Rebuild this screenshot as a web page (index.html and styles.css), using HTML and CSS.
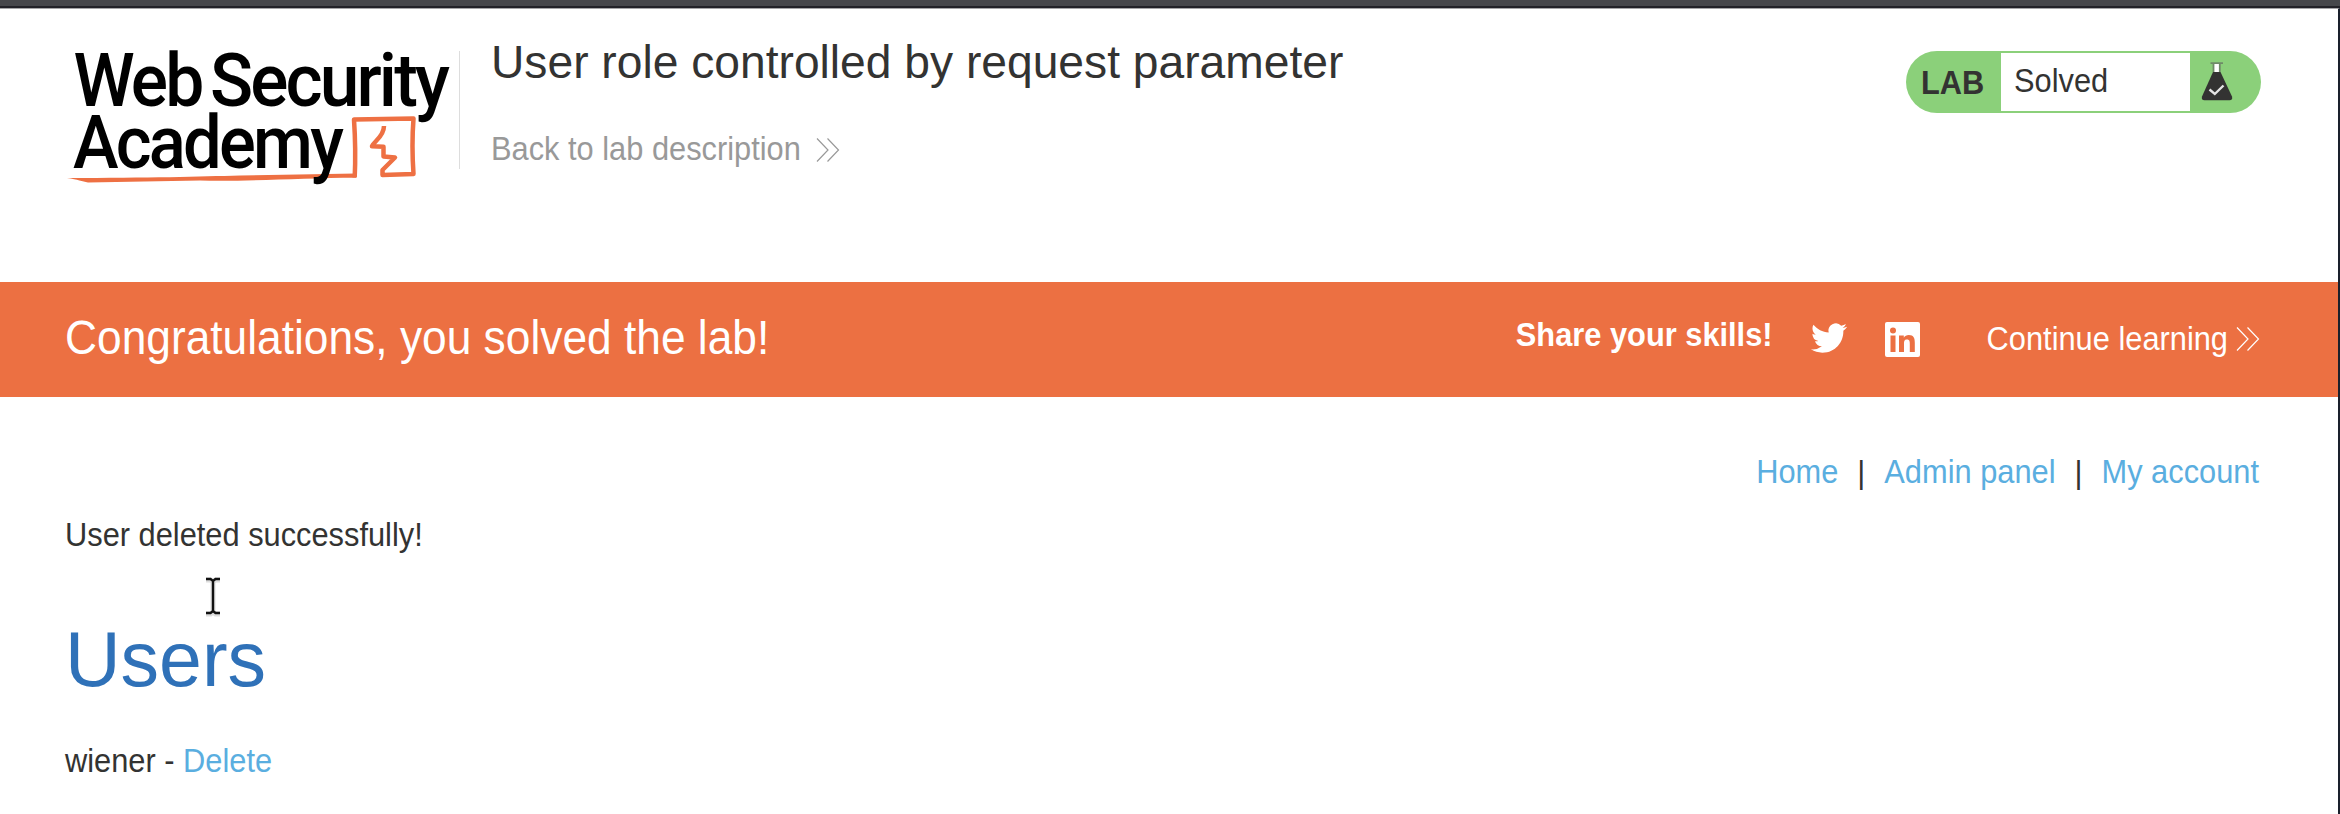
FILE: index.html
```html
<!DOCTYPE html>
<html lang="en">
<head>
<meta charset="utf-8">
<title>User role controlled by request parameter</title>
<link rel="stylesheet" href="styles.css">
</head>
<body>
<div class="chrome-bar"></div>
<div class="page">
  <header class="lab-header">
    <svg class="logo" width="394" height="160" viewBox="60 30 394 160" role="img" aria-label="Web Security Academy">
      <g class="logo-mark">
        <path class="logo-fill" d="M67 178 C150 178 200 176.500 240 175.500 L356 173.500 L356 177.800 C300 178 240 182 200 180.500 L88 182.500 C82 181.500 78 179.500 67 178Z"/>
        <path class="logo-line" d="M354.700 177.500 Q356 150 354 119.500 L413.500 118.500 Q411.500 145 413.500 174 L382.500 175 L382.500 170 L395 157.500 L383.500 156.500 L383.500 146.800 L372 146.300 C373 142 384 137 384 126"/>
      </g>
      <g class="logo-text">
        <text x="73.500" y="106" textLength="128" lengthAdjust="spacingAndGlyphs">Web</text>
        <text x="210" y="106" textLength="237" lengthAdjust="spacingAndGlyphs">Security</text>
        <text x="73" y="168" textLength="268" lengthAdjust="spacingAndGlyphs">Academy</text>
      </g>
    </svg>
    <div class="title-block">
      <h2 class="title">User role controlled by request parameter</h2>
      <a class="back-link"><span class="copy">Back to lab description</span>
        <svg class="chevrons" width="24" height="24" viewBox="0 0 24 24"><path d="M1 .5 12 12 1 23.500M11.500 .5 22.500 12 11.500 23.500"/></svg>
      </a>
    </div>
    <div class="lab-status">
      <span class="lab-tag"><span class="copy">LAB</span></span>
      <span class="lab-state"><span class="copy">Solved</span></span>
      <svg class="flask" width="32" height="39" viewBox="0 0 32 39">
        <path d="M12.500 1.500h6v9h-6z" fill="#fff"/>
        <path d="M9.500 1.200h12.500M12.500 1.200v9M18.800 1.200v9" stroke="#6f8a68" stroke-width="1.800" fill="none"/>
        <path d="M12 10h7.500l11.500 24.500q1 3.800-2.500 3.800h-25Q0 38.300 1 34.500z" fill="#333332"/>
        <path d="M8.500 27.500l5.300 4.500 8.700-8.500" stroke="#e4e4e4" stroke-width="2.400" fill="none"/>
      </svg>
    </div>
  </header>
  <section class="banner">
    <h4 class="banner-title"><span>Congratulations, you solved the lab!</span></h4>
    <div class="banner-actions">
      <span class="share"><span class="copy">Share your skills!</span></span>
      <svg class="twitter" width="36" height="36" viewBox="0 0 24 24"><path fill="#fff" d="M23.953 4.570a10 10 0 01-2.825.775 4.958 4.958 0 002.163-2.723c-.951.555-2.005.959-3.127 1.184a4.920 4.920 0 00-8.384 4.482C7.690 8.095 4.067 6.130 1.640 3.162a4.822 4.822 0 00-.666 2.475c0 1.710.870 3.213 2.188 4.096a4.904 4.904 0 01-2.228-.616v.060a4.923 4.923 0 003.946 4.827 4.996 4.996 0 01-2.212.085 4.936 4.936 0 004.604 3.417 9.867 9.867 0 01-6.102 2.105c-.390 0-.779-.023-1.170-.067a13.995 13.995 0 007.557 2.209c9.053 0 13.998-7.496 13.998-13.985 0-.210 0-.420-.015-.630A9.935 9.935 0 0024 4.590z"/></svg>
      <svg class="linkedin" width="35" height="35" viewBox="0 0 35 35">
        <rect width="35" height="35" rx="2" fill="#fff"/>
        <circle cx="8" cy="8.500" r="3"/>
        <path d="M5.500 13.500h5V30h-5zM14 13.500h4.800v2.300c1-1.700 2.800-2.700 5-2.700 5 0 6 3.300 6 7.600V30h-5v-8.200c0-2 0-4.400-2.800-4.400s-3 2.100-3 4.300V30h-5z"/>
      </svg>
      <a class="continue"><span class="copy">Continue learning</span>
        <svg class="chevrons" width="24" height="24" viewBox="0 0 24 24"><path d="M1 .5 12 12 1 23.500M11.500 .5 22.500 12 11.500 23.500"/></svg>
      </a>
    </div>
  </section>
  <main class="content">
    <nav class="nav"><a class="copy">Home</a><span class="bar">|</span><a class="copy">Admin panel</a><span class="bar">|</span><a class="copy">My account</a></nav>
    <p class="message"><span class="copy">User deleted successfully!</span></p>
    <h1 class="heading">Users</h1>
    <div class="user-row"><span class="copy">wiener - <a>Delete</a></span></div>
  </main>
  <svg class="cursor" width="22" height="42" viewBox="0 0 22 42">
    <path class="cursor-edge" d="M4 4h4.500l2.500 2 2.500-2h4.500M11 5v32M4 38h4.500l2.500-2 2.500 2h4.500"/>
    <path class="cursor-core" d="M4 3h4.500l2.500 2 2.500-2h4.500M11 4v32M4 37h4.500l2.500-2 2.500 2h4.500"/>
  </svg>
</div>
</body>
</html>
```
FILE: styles.css
```css
* { box-sizing: border-box; }

body {
  margin: 0;
  height: 814px;
  overflow: hidden;
  background: #fff;
  color: #333332;
  font-family: "Liberation Sans", Arial, sans-serif;
  font-size: 30.8px;
  line-height: 36px;
}

h1, h2, h4, p { margin: 0; font-weight: 400; }

.chrome-bar {
  height: 8px;
  background: #46474b;
  border-bottom: 2px solid #222228;
}

.page {
  position: relative;
  height: 806px;
  border-top: 1px solid #a5a5a8;
  border-right: 2px solid #1a202c;
}

/* Vertical stretch anchored on the text baseline */
.copy {
  display: inline-block;
  transform: scaleY(1.07);
  transform-origin: 0 28.600px;
  white-space: nowrap;
}

.lab-header {
  display: flex;
  align-items: flex-start;
  height: 273px;
  padding: 21px 77px 0 60px;
}

.logo { flex: none; overflow: visible; }
.logo-text {
  font-family: Roboto, sans-serif;
  font-size: 74px;
  font-weight: 500;
  letter-spacing: -3px;
}
.logo-fill { fill: #ee7043; }
.logo-line {
  fill: none;
  stroke: #ee7043;
  stroke-width: 4.500;
  stroke-linejoin: round;
}

.title-block {
  flex: 1;
  height: 118px;
  margin: 21px 0 0 5px;
  padding-left: 31px;
  border-left: 1px solid #ddd;
}
.title {
  margin-top: -16px;
  font-size: 46.2px;
  line-height: 54px;
  white-space: nowrap;
}
.back-link {
  display: flex;
  align-items: center;
  gap: 15px;
  margin-top: 43px;
  color: #999;
}

.chevrons {
  fill: none;
  stroke: currentColor;
  stroke-width: 1.200;
}

.lab-status {
  display: flex;
  width: 355px;
  height: 62px;
  margin-top: 21px;
  border-radius: 31px;
  background: #8bd07a;
}
.lab-tag {
  width: 95px;
  padding: 15px 0 0 15px;
  font-weight: 700;
}
.lab-state {
  width: 189px;
  height: 58px;
  margin-top: 2px;
  padding: 11px 0 0 13px;
  background: #fff;
}
.flask { margin: 11px 0 0 11px; }

.banner {
  display: flex;
  justify-content: space-between;
  height: 115px;
  padding: 0 78px 0 65px;
  background: #ec7042;
  color: #fff;
}
.banner-title {
  padding-top: 30px;
  font-size: 44.300px;
  line-height: 54px;
}
.banner-title span {
  display: inline-block;
  transform: scaleY(1.07);
  transform-origin: 0 42.400px;
}
.banner-actions { display: flex; }
.share { margin-top: 36px; font-weight: 700; }
.twitter { margin: 38px 0 0 38px; }
.linkedin { margin: 40px 0 0 38px; fill: #ec7042; }
.continue {
  display: flex;
  gap: 8px;
  margin: 40px 0 0 67px;
}
.continue .chevrons { margin-top: 5px; }

.content { padding: 58px 79px 0 65px; }
.nav {
  display: flex;
  justify-content: flex-end;
  color: #5aaee0;
}
.bar { padding: 0 19px; color: #333332; }
.message { margin-top: 27px; }
.heading {
  margin-top: 61px;
  color: #2f71b8;
  font-size: 77px;
  line-height: 88px;
}
.user-row { margin-top: 41px; }
.user-row a { color: #5aaee0; }

.cursor {
  position: absolute;
  left: 202px;
  top: 567px;
  fill: none;
}
.cursor-edge { stroke: #ddd; stroke-width: 5; }
.cursor-core { stroke: #111; stroke-width: 2.400; }
```
